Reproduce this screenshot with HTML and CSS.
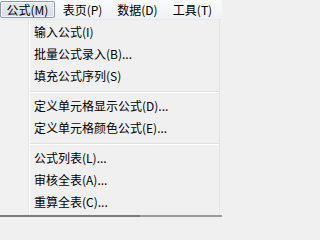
FILE: index.html
```html
<!DOCTYPE html>
<html lang="zh-CN">
<head>
<meta charset="utf-8">
<link rel="stylesheet" href="styles.css">
</head>
<body>
<div class="menubar">
  <div class="top-item active">公式(M)</div>
  <div class="top-item">表页(P)</div>
  <div class="top-item">数据(D)</div>
  <div class="top-item">工具(T)</div>
</div>
<div class="menu">
  <div class="item">输入公式(I)</div>
  <div class="item">批量公式录入(B)...</div>
  <div class="item">填充公式序列(S)</div>
  <div class="sep"></div>
  <div class="item">定义单元格显示公式(D)...</div>
  <div class="item">定义单元格颜色公式(E)...</div>
  <div class="sep"></div>
  <div class="item">公式列表(L)...</div>
  <div class="item">审核全表(A)...</div>
  <div class="item">重算全表(C)...</div>
</div>
<div class="bottom-edge"></div>
</body>
</html>
```
FILE: styles.css
```css
html, body {
  margin: 0;
  padding: 0;
  width: 222px;
  height: 217px;
  overflow: hidden;
  background: #f0f0f0;
  font-family: "Noto Sans CJK SC", "Noto Sans", sans-serif;
  font-size: 12px;
  color: #000;
}
.menubar {
  display: flex;
  height: 20px;
  background: linear-gradient(#fafbfc, #eef1f5);
  border-bottom: 1px solid #e6e8ea;
  box-sizing: border-box;
  padding-top: 1px;
}
.top-item {
  width: 55px;
  box-sizing: border-box;
  height: 17px;
  line-height: 16px;
  text-align: center;
  border: 1px solid transparent;
  border-radius: 2px;
  flex: none;
}
.top-item.active {
  background: linear-gradient(#e5eaf1, #d6dde8);
  border-color: #8e9aab;
  box-shadow: inset 0 0 0 1px #f4f6f9;
}
.menu {
  width: 220px;
  height: 195px;
  box-sizing: border-box;
  padding-top: 1px;
  background: linear-gradient(to right, #f1f1f1 0, #f1f1f1 28px, #e2e3e3 28px, #e2e3e3 29px, #ffffff 29px, #ffffff 30px, #f0f0f0 30px);
  border-right: 1px solid #e4e4e4;
}
.bottom-edge {
  height: 2px;
  background: linear-gradient(to right, #7a7a7a 0, #7a7a7a 140px, #9a9a9a 140px);
}
.item {
  height: 22px;
  line-height: 22px;
  padding-left: 34px;
  white-space: nowrap;
}
.sep {
  height: 8px;
  margin-left: 30px;
  position: relative;
}
.sep::after {
  content: "";
  display: block;
  position: relative;
  top: 4px;
  height: 1px;
  background: #e0e0e0;
  border-bottom: 1px solid #ffffff;
}
```
